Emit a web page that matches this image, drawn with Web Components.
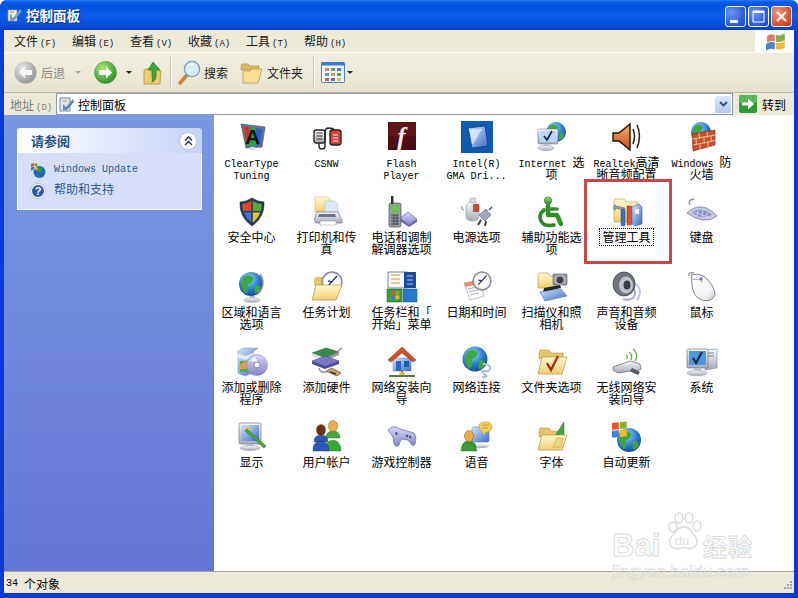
<!DOCTYPE html>
<html lang="zh">
<head>
<meta charset="utf-8">
<title>控制面板</title>
<style>
html, body { margin: 0; padding: 0; background: #fff; }
body { font: 12px "Noto Sans CJK SC", sans-serif; }
</style>
</head>
<body>
<xp-window>
  <xp-titlebar slot="top">控制面板</xp-titlebar>
  <xp-menubar slot="top"></xp-menubar>
  <xp-toolbar slot="top"></xp-toolbar>
  <xp-addressbar slot="top">控制面板</xp-addressbar>
  <xp-sidebar slot="side"></xp-sidebar>
  <cp-grid slot="main">
    <cp-icon icon="cleartype"><span>ClearType</span><br><span>Tuning</span></cp-icon>
    <cp-icon icon="csnw"><span>CSNW</span></cp-icon>
    <cp-icon icon="flash"><span>Flash</span><br><span>Player</span></cp-icon>
    <cp-icon icon="intel"><span>Intel(R)</span><br><span>GMA Dri...</span></cp-icon>
    <cp-icon icon="internet"><span>Internet </span>选<br>项</cp-icon>
    <cp-icon icon="realtek"><span>Realtek</span>高清<br>晰音频配置</cp-icon>
    <cp-icon icon="firewall"><span>Windows </span>防<br>火墙</cp-icon>

    <cp-icon icon="security">安全中心</cp-icon>
    <cp-icon icon="printers">打印机和传<br>真</cp-icon>
    <cp-icon icon="phone">电话和调制<br>解调器选项</cp-icon>
    <cp-icon icon="power">电源选项</cp-icon>
    <cp-icon icon="access">辅助功能选<br>项</cp-icon>
    <cp-icon icon="admin" focused>管理工具</cp-icon>
    <cp-icon icon="keyboard">键盘</cp-icon>

    <cp-icon icon="region">区域和语言<br>选项</cp-icon>
    <cp-icon icon="tasks">任务计划</cp-icon>
    <cp-icon icon="taskbar">任务栏和「<br>开始」菜单</cp-icon>
    <cp-icon icon="datetime">日期和时间</cp-icon>
    <cp-icon icon="scanner">扫描仪和照<br>相机</cp-icon>
    <cp-icon icon="sound">声音和音频<br>设备</cp-icon>
    <cp-icon icon="mouse">鼠标</cp-icon>

    <cp-icon icon="addremove">添加或删除<br>程序</cp-icon>
    <cp-icon icon="hardware">添加硬件</cp-icon>
    <cp-icon icon="netsetup">网络安装向<br>导</cp-icon>
    <cp-icon icon="netconn">网络连接</cp-icon>
    <cp-icon icon="folderopts">文件夹选项</cp-icon>
    <cp-icon icon="wireless">无线网络安<br>装向导</cp-icon>
    <cp-icon icon="system">系统</cp-icon>

    <cp-icon icon="display">显示</cp-icon>
    <cp-icon icon="users">用户帐户</cp-icon>
    <cp-icon icon="game">游戏控制器</cp-icon>
    <cp-icon icon="speech">语音</cp-icon>
    <cp-icon icon="fonts">字体</cp-icon>
    <cp-icon icon="autoupdate">自动更新</cp-icon>
  </cp-grid>
  <xp-highlight slot="main"></xp-highlight>
  <xp-statusbar slot="bottom"><span>34 </span>个对象</xp-statusbar>
  <baidu-mark slot="over"></baidu-mark>
</xp-window>

<script>
const CJK = '"Noto Sans CJK SC", sans-serif';
const MONO = '"Liberation Mono", monospace';

const DEFS = `<defs>
<linearGradient id="fo" x1="0" y1="0" x2="0" y2="1"><stop offset="0" stop-color="#fffad0"/><stop offset="1" stop-color="#f2cf70"/></linearGradient>
<radialGradient id="gl" cx=".4" cy=".3" r=".8"><stop offset="0" stop-color="#8fdcf5"/><stop offset=".55" stop-color="#2a78cc"/><stop offset="1" stop-color="#123a90"/></radialGradient>
<linearGradient id="gr" x1="0" y1="0" x2="0" y2="1"><stop offset="0" stop-color="#a8e070"/><stop offset="1" stop-color="#238a22"/></linearGradient>
<linearGradient id="bl" x1="0" y1="0" x2="1" y2="1"><stop offset="0" stop-color="#d4e6fc"/><stop offset="1" stop-color="#3a6cc8"/></linearGradient>
<linearGradient id="si" x1="0" y1="0" x2="0" y2="1"><stop offset="0" stop-color="#fafafa"/><stop offset="1" stop-color="#a4aab8"/></linearGradient>
<linearGradient id="wh" x1="0" y1="0" x2="1" y2="1"><stop offset="0" stop-color="#fff"/><stop offset=".7" stop-color="#f4f4f6"/><stop offset="1" stop-color="#c4c8d0"/></linearGradient>
<linearGradient id="pu" x1="0" y1="0" x2="0" y2="1"><stop offset="0" stop-color="#d8d8f8"/><stop offset="1" stop-color="#8484c8"/></linearGradient>
<linearGradient id="or" x1="0" y1="0" x2="0" y2="1"><stop offset="0" stop-color="#f8b060"/><stop offset="1" stop-color="#c84a20"/></linearGradient>
</defs>`;

// bits that several icons share
const globe = (cx, cy, r) => `<circle cx="${cx}" cy="${cy}" r="${r}" fill="url(#gl)"/><path d="M${cx - r * .6} ${cy - r * .6}q${r * .5} ${-r * .3} ${r * .8} ${r * .1}q${-r * .1} ${r * .5} ${-r * .5} ${r * .5}q${r * .2} ${r * .4} ${-r * .1} ${r * .8}q${-r * .6} ${-r * .5} ${-r * .2} ${-r * 1.4}zM${cx + r * .3} ${cy + r * .1}q${r * .5} ${-r * .1} ${r * .5} ${r * .3}q${-r * .1} ${r * .4} ${-r * .5} ${r * .4}z" fill="#3fa83a"/>`;
const monitor = (x, y, w, h) => `<rect x="${x}" y="${y}" width="${w}" height="${h}" rx="1.5" fill="url(#si)" stroke="#6a7890" stroke-width=".7"/><rect x="${x + 2}" y="${y + 2}" width="${w - 4}" height="${h - 5}" fill="url(#bl)"/><path d="M${x + w / 2 - 3} ${y + h}h6l1 3h-8z" fill="#b8c0d0"/><ellipse cx="${x + w / 2}" cy="${y + h + 4}" rx="${w / 2 - 1}" ry="2.4" fill="url(#si)" stroke="#8a94a8" stroke-width=".5"/>`;
const clock = (cx, cy, r) => `<circle cx="${cx}" cy="${cy}" r="${r}" fill="#e8e8f0" stroke="#8a8a98" stroke-width="1.4"/><circle cx="${cx}" cy="${cy}" r="${r - 2.2}" fill="#fff"/><path d="M${cx - r * .4} ${cy + r * .4}L${cx + r * .5} ${cy - r * .6}M${cx} ${cy}l${-r * .4} ${-r * .1}" stroke="#2a3a70" stroke-width="1.3" fill="none"/>`;
const person = (x, y, head, body) => `<path d="M${x - 7} ${y + 15}q0 -7 7 -7t7 7z" fill="${body}" stroke="#205020" stroke-width=".4"/><ellipse cx="${x}" cy="${y + 3}" rx="4.6" ry="5.6" fill="${head}" stroke="#7a4a18" stroke-width=".4"/>`;
const winflag = (x, y, s) => `<g transform="translate(${x} ${y}) scale(${s}) skewY(-6)"><path d="M0 1h6.5v6.5H0z" fill="#e4542c"/><path d="M7.5 1H14v6.5H7.5z" fill="#7fb22e"/><path d="M0 8.5h6.5V15H0z" fill="#3f7fd8"/><path d="M7.5 8.5H14V15H7.5z" fill="#f6b81e"/></g>`;

const ICONS = {
  cleartype: `<path d="M5 3l24 3-3 20-16 1z" fill="#68748c" stroke="#4a5268" stroke-width=".7"/><path d="M7.5 5.5L14 6.4 12 25h-1z" fill="#c8342e"/><path d="M14 6.4L20 7.2 20 25H12z" fill="#2aa040"/><path d="M20 7.2l6.5 .9L24 24.6 20 25z" fill="#2a60c8"/><text x="16.5" y="23" text-anchor="middle" font-family="Liberation Sans" font-weight="700" font-size="21" fill="#101010">A</text><rect x="14" y="26" width="5" height="3" fill="#d0d8e8"/>`,
  csnw: `<rect x="3" y="9" width="11" height="13" rx="2.5" fill="url(#si)" stroke="#222" stroke-width="1.3"/><path d="M5.5 12h6M5.5 15h6M5.5 18h6" stroke="#333"/><rect x="19" y="9" width="11" height="15" rx="2.5" fill="#d84038" stroke="#222" stroke-width="1.3"/><path d="M22 14h5M22 17h5M22 20h5" stroke="#fff"/><path d="M8 22v3q0 3 3 3t3-3V11q0-4 4-4t5 2" fill="none" stroke="#222" stroke-width="1.4"/>`,
  flash: `<rect x="2" y="1" width="28" height="28" fill="#4e0d12"/><rect x="2" y="1" width="28" height="14" fill="#5e1418"/><text x="15.5" y="24" text-anchor="middle" font-family="Liberation Serif" font-style="italic" font-weight="700" font-size="25" fill="#f4ecec">f</text>`,
  intel: `<rect x="0" y="0" width="32" height="32" fill="#0b5cb0"/><path d="M7 7l17-2 3 20-16 2z" fill="url(#bl)" stroke="#0a3a80" stroke-width=".8"/><path d="M9 9l12-1-8 14-2 2z" fill="#fff" opacity=".55"/>`,
  internet: `${globe(20, 11, 10)}<rect x="2" y="8" width="20" height="15" rx="1.5" fill="url(#si)" stroke="#6a7890" stroke-width=".6"/><rect x="4" y="10" width="16" height="11" fill="#b8d4f8"/><path d="M8 15l3 4 5-9" fill="none" stroke="#16204c" stroke-width="1.6"/><ellipse cx="10" cy="27" rx="8" ry="2.6" fill="url(#si)" stroke="#8a94a8" stroke-width=".5"/><path d="M8 23h5v2H8z" fill="#b8c0d0"/>`,
  realtek: `<path d="M2 12h6l11-9v26L8 20H2z" fill="url(#or)" stroke="#201008" stroke-width="1.4"/><path d="M22 8q3 7 0 15M26 4q5 11 0 23" fill="none" stroke="#2a1a10" stroke-width="1.5"/>`,
  firewall: `${globe(15, 11, 10)}<path d="M6 13l23-4v15L7 30z" fill="#c8502c" stroke="#6a2a14" stroke-width=".6"/><path d="M6.5 18l22.5-4M7 24l22-4.500M13 12l.5 6M21 10.500l.5 6M10 17.500l.3 6M18 16l.3 6.500M25 15l.3 6M14 23l.3 6M22 21l.3 7" stroke="#f0c098" stroke-width="1" fill="none"/>`,
  security: `<path d="M16 2q6 4 12 4 1 15-12 24Q3 21 4 6q6 0 12-4z" fill="#2a3a58" stroke="#1a2438" stroke-width=".6"/><path d="M15.300 5q-4 2.500-9 3 0 4 1 7h8z" fill="#d84a2c"/><path d="M16.800 5q4 2.500 9 3 0 4-1 7h-8z" fill="#5aaa3a"/><path d="M7.800 16.500h7.500v10Q10 22 7.800 16.500z" fill="#3a78d0"/><path d="M24.200 16.500h-7.400v10q5.500-4 7.400-10z" fill="#f2c62a"/>`,
  printers: `<path d="M4 1h13l4 4v11H4z" fill="url(#fo)" stroke="#c8a860" stroke-width=".5"/><path d="M14 5h10l3 3v10H14z" fill="#d8e8fa" stroke="#9ab0d0" stroke-width=".5"/><path d="M6 16h21l4 8v3H5l-2-3z" fill="url(#si)" stroke="#70788a" stroke-width=".7"/><path d="M9 25h16v4H9z" fill="#fff" stroke="#8a92a2" stroke-width=".5"/><path d="M8 18h16l1 3H7z" fill="#6a7284"/>`,
  phone: `<rect x="3" y="7" width="12" height="24" rx="2" fill="#9aa0a8" stroke="#48505a" stroke-width=".7"/><rect x="5" y="9" width="8" height="8" fill="#70c050"/><path d="M5 19h8M5 22h8M5 25h8M5 28h8M8 19v10M11 19v10" stroke="#3c4450"/><rect x="5" y="0" width="2.500" height="8" fill="#30343c"/><path d="M14 22l8-6 9 7-8 6z" fill="url(#pu)" stroke="#5a5a98" stroke-width=".6"/><path d="M14 22v3l9 6 8-5v-3l-8 6z" fill="#6a6aa8"/>`,
  power: `<rect x="5" y="6" width="13" height="19" rx="5" fill="url(#si)" stroke="#9098a8" stroke-width=".6"/><rect x="9" y="2" width="6" height="5" rx="1.500" fill="#d8d8e0" stroke="#9098a8" stroke-width=".5"/><rect x="12" y="8" width="6" height="8" fill="#d0483c"/><path d="M3 14q-3 0-2-4" stroke="#7a8090" fill="none"/><path d="M18 19l7-6 5 6-6 6z" fill="#a0a8bc" stroke="#5a6278" stroke-width=".6"/><path d="M20 24l-3 5M25 25l-1 5" stroke="#3c4252" stroke-width="2"/><path d="M28 14l3-3" stroke="#4a5268" stroke-width="1.500"/>`,
  access: `<circle cx="12" cy="4.500" r="3.800" fill="url(#gr)" stroke="#1c6a1c" stroke-width=".5"/><path d="M12 10v9h9l4 9" fill="none" stroke="#2f9226" stroke-width="4.500" stroke-linejoin="round" stroke-linecap="round"/><path d="M14 13h7" stroke="#2f9226" stroke-width="3.400" stroke-linecap="round"/><path d="M8 14q-6 5-3 11t13 4" fill="none" stroke="#2a8a24" stroke-width="3.600" stroke-linecap="round"/>`,
  admin: `<path d="M3 5l1-2h9l2 3h11v20H3z" fill="url(#fo)" stroke="#b8923c" stroke-width=".6"/><path d="M5 10l9 2-1 2-9-2zM5 9a2.500 2.500 0 1 0 0 5" fill="#9aa6b8" stroke="#5a6478" stroke-width=".6"/><rect x="10" y="13" width="4" height="17" rx="1.500" fill="#3a74c4" stroke="#1c3c78" stroke-width=".5"/><rect x="16" y="10" width="4.500" height="19" fill="#d4543a" stroke="#7a2c1c" stroke-width=".5"/><path d="M21 11l7-3 3 3v17l-7 2-3-2z" fill="url(#bl)" stroke="#4a5c90" stroke-width=".6"/><rect x="24" y="13" width="4" height="5" fill="#e8f0fc"/>`,
  keyboard: `<path d="M4 9q-3-5 4-6" fill="none" stroke="#8c8ca8" stroke-width="1.300"/><path d="M1 17q7-7 15-6t15 9q-6 5-14 4T1 17z" fill="#c8c8e0" stroke="#6c6c98" stroke-width=".7"/><path d="M6 16q6-3 11-2t9 5q-5 2-10 2T6 16z" fill="#8a90c8"/><path d="M8 16l14 5M12 14.500l-1 6M17 14l-1 7M22 16l-2 5" stroke="#e4e8f8" stroke-width=".7"/>`,
  region: `${globe(15, 13, 12)}<path d="M24 3q7 10-2 20" fill="none" stroke="#8a94a8" stroke-width="1.400"/><path d="M14 25h5v3h-5z" fill="#b8c0d0"/><ellipse cx="16" cy="29" rx="8" ry="2.300" fill="url(#si)" stroke="#8a94a8" stroke-width=".5"/>`,
  tasks: `<path d="M3 9l1-3h9l2 3h12v6H3z" fill="#e8c468"/>${clock(21, 11, 10)}<path d="M1 29L5 14h26l-6 15z" fill="url(#fo)" stroke="#b8923c" stroke-width=".7"/>`,
  taskbar: `<rect x="2" y="1" width="19" height="16" fill="#f4f6fa" stroke="#1c3c78" stroke-width=".6"/><rect x="18" y="1" width="12" height="16" fill="#1c4f9a"/><path d="M5 4h9M5 8h9M5 12h9" stroke="#d8a030" stroke-width="1.200"/><path d="M21 5h6M21 9h6M21 13h6" stroke="#a8c8f0" stroke-width="1.200"/><rect x="1" y="18" width="15" height="13" fill="#3c9a3c" stroke="#1c5c1c" stroke-width=".5"/>${winflag(5, 20, .6)}<rect x="17" y="18" width="14" height="13" fill="#2878cc" stroke="#1c4c90" stroke-width=".5"/>`,
  datetime: `<path d="M3 12l15-3 5 16-14 4z" fill="#fafafa" stroke="#9a9aa8" stroke-width=".6"/><path d="M3 12l15-3 1 4-15 3z" fill="#e89070"/><path d="M7 18l9-2M8 21l9-2M9 24l9-2" stroke="#b0b4c4"/>${clock(21, 10, 9)}`,
  scanner: `<path d="M2 4l1-2h9l2 3h6v12H2z" fill="url(#fo)" stroke="#b8923c" stroke-width=".6"/><rect x="17" y="3" width="14" height="11" rx="1" fill="#9aa0ac" stroke="#4c525e" stroke-width=".6"/><circle cx="24" cy="9" r="4.200" fill="#3c4250" stroke="#dcdce4"/><path d="M8 17L24 14l1 3L7 21z" fill="#20242c"/><path d="M4 21l21-3 6 7-22 5z" fill="url(#bl)" stroke="#5a6c98" stroke-width=".6"/>`,
  sound: `<path d="M20 15q7 5 2 12-5 3-10 1" fill="none" stroke="#a0a0e0" stroke-width="1.800"/><path d="M24 12q9 8 2 17" fill="none" stroke="#c0c0ee" stroke-width="1.800"/><ellipse cx="13" cy="13" rx="11" ry="12" fill="#70747c" stroke="#3c4048" stroke-width=".8"/><ellipse cx="15" cy="14" rx="7" ry="8.500" fill="#c0c4cc"/><ellipse cx="16" cy="14" rx="3.500" ry="4.500" fill="#383c44"/>`,
  mouse: `<path d="M8 2q-6-1-5 3" fill="none" stroke="#9a9aa8" stroke-width="1.400"/><path d="M6 4q9-3 16 5t7 15q-4 8-13 5T6 14 6 4z" fill="url(#wh)" stroke="#707684" stroke-width=".9"/><path d="M6 8q8 2 12-3M14 6.500l2 5" fill="none" stroke="#8a8a98" stroke-width=".7"/><circle cx="15" cy="8" r="1.500" fill="#6a6ab8"/>`,
  addremove: `<path d="M2 5l6-3h14l-5 4v21l-8 3-7-3z" fill="url(#bl)" stroke="#7a8cb0" stroke-width=".5"/><path d="M2 8l8 2 7-3v4l-7 3-8-2z" fill="#e4ecfa"/><rect x="4" y="15" width="9" height="11" fill="#55a84c"/><path d="M4 19l5-4 4 3v5H4z" fill="#e0a040"/><circle cx="21" cy="19" r="10.500" fill="url(#pu)" stroke="#7c7cb4" stroke-width=".5"/><circle cx="21" cy="19" r="3" fill="#fff" stroke="#8a8ab8"/><path d="M14 15a8 8 0 0 1 6-4l1 5z" fill="#f0f4ff"/>`,
  hardware: `<path d="M1 7l14-5 13 4-14 6z" fill="#3c8a48" stroke="#1e4c28" stroke-width=".5"/><path d="M1 7v3l13 5v-3z" fill="#dcdce4"/><path d="M14 12v3l14-6V6z" fill="#9a9aa8"/><path d="M1 15l13-5 14 5-14 5z" fill="#7a7ac8" stroke="#3c3c80" stroke-width=".5"/><path d="M1 15v3l13 5v-3zM14 20v3l14-5v-3z" fill="#4c4c98"/><path d="M27 5l4-3" stroke="#8a8a98" stroke-width="1.400"/><path d="M8 22q0 5 8 4" fill="none" stroke="#8a8a98" stroke-width="1.400"/><path d="M15 25l6-3 9 5-4 3z" fill="#c8a070" stroke="#4c3820" stroke-width=".6"/><path d="M19 26l6 2" stroke="#4c3820" stroke-width="1.500"/>`,
  netsetup: `<path d="M7 12h18v13H7z" fill="url(#bl)" stroke="#6a84b4" stroke-width=".5"/><path d="M2 14L16 1l14 13-3 2-11-9-11 9z" fill="#d0502c" stroke="#8a3018" stroke-width=".5"/><rect x="18" y="15" width="5" height="6" fill="#1e5cb0"/><rect x="10" y="15" width="5" height="10" fill="#2868bc"/><path d="M16 25v4M3 30h26" stroke="#5a7a3c" stroke-width="2"/><rect x="13.500" y="26" width="5" height="3" fill="#e0b040"/>`,
  netconn: `${globe(14, 13, 12.500)}<path d="M22 18q7 0 7 4t-5 3 0 4q4 2-3 2" fill="none" stroke="#a8c0dc" stroke-width="2.200"/>`,
  folderopts: `<path d="M3 7l1-3h9l2 3h12v6H3z" fill="#e8c468" stroke="#b08a38" stroke-width=".5"/><path d="M2 28L6 11h25l-5 17z" fill="url(#fo)" stroke="#b8923c" stroke-width=".7"/><path d="M11 17l4 7 7-14" fill="none" stroke="#b02418" stroke-width="2.300"/>`,
  wireless: `<path d="M2 21l17-6 10 3 1 5-7 4-3-2-13 2-5-3z" fill="url(#si)" stroke="#5a606c" stroke-width=".7"/><path d="M21 22l8 4-2 3-8-4z" fill="#505664"/><path d="M15 9q2 1 1 4M18 6q4 3 2 8M22 3q6 5 2 12" fill="none" stroke="#58b048" stroke-width="1.300"/>`,
  system: `<path d="M19 4l12-1v19l-12 2z" fill="url(#si)" stroke="#7a8296" stroke-width=".6"/><path d="M22 7h6M22 10h6" stroke="#7a8296"/><rect x="1" y="3" width="21" height="19" rx="1.500" fill="url(#si)" stroke="#687488" stroke-width=".7"/><rect x="3" y="5" width="17" height="14" fill="#4a98dc"/><path d="M7 12l3 5 6-11" fill="none" stroke="#16204c" stroke-width="2"/><path d="M8 22h7v3H8z" fill="#b8c0d0"/><ellipse cx="11" cy="27" rx="10" ry="2.800" fill="url(#si)" stroke="#8a94a8" stroke-width=".5"/>`,
  display: `${monitor(3, 2, 22, 21)}<path d="M8 8l4-2 3 3-3 3z" fill="#e8c050"/><path d="M11 8l19 17-2 2L9 10z" fill="#48a83c" stroke="#1e6a1c" stroke-width=".5"/>`,
  users: `${person(22, 2, "#f0a848", "#48a840")}<path d="M14 30q-1-10 8-11 8 1 8 11z" fill="#3ca838" stroke="#1c6a1c" stroke-width=".4"/>${person(10, 6, "#6a3010", "#2c58b4")}<path d="M2 30q-1-9 8-10 8 1 8 10z" fill="#2c58b4" stroke="#183070" stroke-width=".4"/>`,
  game: `<path d="M2 9l4-3q5-1 8 2l7 2 7 2q3 4 1 11-2 3-4 0l-3-4-7-1-2 6q-3 3-5-1l-1-7z" fill="url(#pu)" stroke="#6868a8" stroke-width=".7"/><path d="M9 12l3 1M10.500 11v3" stroke="#4c4c90" stroke-width="1.200"/><circle cx="21" cy="15" r="1.200" fill="#4c4c90"/><circle cx="24" cy="16" r="1.200" fill="#4c4c90"/>`,
  speech: `<rect x="11" y="6" width="17" height="15" rx="1.500" fill="url(#bl)" stroke="#6a7c9c" stroke-width=".6"/><ellipse cx="20" cy="25" rx="8" ry="2" fill="url(#si)"/><path d="M18 5q0-4 6-4h3q4 1 4 5t-4 5h-2l-3 4v-4q-4-1-4-6z" fill="#f6cc58" stroke="#b08a28" stroke-width=".5"/><path d="M21 4h7M21 7h6" stroke="#b08a28" stroke-width=".7"/>${person(8, 12, "#f0a848", "#48a840")}<path d="M0 30q0-8 8-9 7 1 8 9z" fill="#3c9a34" stroke="#1c5c1c" stroke-width=".4"/>`,
  fonts: `<path d="M3 10l1-3h9l2 3h10v6H3z" fill="#e8c468" stroke="#b08a38" stroke-width=".5"/><path d="M17 18L28 1v17z" fill="#3ca83c" stroke="#1c6a1c" stroke-width=".5"/><path d="M2 29L6 14h25l-5 15z" fill="url(#fo)" stroke="#b8923c" stroke-width=".7"/><path d="M17 26l4-9h6l-2 9z" fill="#f0d880" stroke="#c8a040" stroke-width=".6"/>`,
  autoupdate: `${globe(18, 19, 12)}${winflag(1, 1, 1.050)}`,
};

class XpWindow extends HTMLElement {
  _template = `
<style>
:host { display: flex; flex-direction: column; position: relative; width: 798px; height: 598px;
  box-sizing: border-box; background: #0a3ad4; border-radius: 7px 7px 0 0; overflow: hidden;
  padding: 0 4px 5px; color: #000; font: 12px ${CJK}; }
.top2 { display: flex; flex-direction: column; }
.body { flex: 1; display: flex; min-height: 0; background: #fff; }
.main { flex: 1; position: relative; background: #fff; }
.side { display: flex; }
</style>
<div class="top2"><slot name="top"></slot></div>
<div class="body">
  <div class="side"><slot name="side"></slot></div>
  <div class="main"><slot name="main"></slot></div>
</div>
<slot name="bottom"></slot>
<slot name="over"></slot>`;
  connectedCallback() {
    this.attachShadow({ mode: "open" }).innerHTML = this._template;
  }
}

class XpTitlebar extends HTMLElement {
  _template = `
<style>
:host { display: flex; align-items: center; height: 30px; margin: 0 -4px; box-sizing: border-box; padding: 0 6px 0 7px; gap: 3px;
  background: linear-gradient(#2a7cf0 0, #0a5cea 2px, #0052e0 6px, #0a5eec 15px, #0450dc 24px, #0240c8 30px); }
.name { flex: 1; color: #fff; font: 700 13.5px/26px ${CJK}; text-shadow: 1px 1px 1px #0a2a80; }
.btns { display: flex; gap: 2px; margin-top: 3px; }
.btn { width: 21px; height: 21px; box-sizing: border-box; border: 1px solid #fff; border-radius: 3px; position: relative;
  background: radial-gradient(circle at 30% 30%, #6c94f0, #2a58d8 70%, #2048c0); }
.close { background: radial-gradient(circle at 30% 30%, #ec9a80, #d84a28 70%, #b83818); }
svg { display: block; }
</style>
<svg width="16" height="16" viewBox="0 0 16 16">
  <rect x="1" y="3" width="9" height="11" fill="#e4ecf4" stroke="#8a98a8" stroke-width=".6"/><path d="M3 7l3 4 7-9 2 2-8 10H3z" fill="#7e9cbc"/><path d="M3 5h4M3 8h2" stroke="#c09040"/>
</svg>
<span class="name"><slot></slot></span>
<span class="btns">
<span class="btn"><svg width="19" height="19"><rect x="4" y="13" width="8" height="3" fill="#fff"/></svg></span>
<span class="btn"><svg width="19" height="19"><path d="M4 4h11v11H4z" fill="none" stroke="#fff"/><path d="M4 5h11" stroke="#fff" stroke-width="2"/></svg></span>
<span class="btn close"><svg width="19" height="19"><path d="M5 5l9 9M14 5l-9 9" stroke="#fff" stroke-width="2.200"/></svg></span>
</span>`;
  connectedCallback() {
    this.attachShadow({ mode: "open" }).innerHTML = this._template;
  }
}

class XpMenubar extends HTMLElement {
  _template = `
<style>
:host { display: flex; align-items: center; height: 23px; box-sizing: border-box; padding-left: 10px; margin: 0;
  background: #ece9d8; border-bottom: 1px solid #fbfaf4; font: 12px ${CJK}; color: #1a1a1a; }
.item { width: 58px; white-space: nowrap; margin-top: -2px; }
.k { font: 9px ${MONO}; margin-left: 2px; }
.flag { margin-left: auto; align-self: stretch; width: 39px; background: #fff; display: flex; align-items: center; justify-content: center; }
</style>
<span class="item">文件<span class="k">(F)</span></span>
<span class="item">编辑<span class="k">(E)</span></span>
<span class="item">查看<span class="k">(V)</span></span>
<span class="item">收藏<span class="k">(A)</span></span>
<span class="item">工具<span class="k">(T)</span></span>
<span class="item">帮助<span class="k">(H)</span></span>
<span class="flag"><svg width="22" height="20" viewBox="0 0 22 20"><g transform="translate(2 3) skewY(-8) scale(1.100)"><path d="M1 2q3-2 7 0v6q-4-2-7 0z" fill="#d8604a" opacity=".85"/><path d="M9 2q4 2 8 0v6q-4 2-8 0z" fill="#84ae46"/><path d="M0 9q4-2 8 0v6q-4-2-8 0z" fill="#4a84cc"/><path d="M9 9q4 2 8 0v6q-4 2-8 0z" fill="#f0b83c"/></g></svg></span>`;
  connectedCallback() {
    this.attachShadow({ mode: "open" }).innerHTML = this._template;
  }
}

class XpToolbar extends HTMLElement {
  _template = `
<style>
:host { display: flex; align-items: center; height: 40px; box-sizing: border-box; padding-left: 10px;
  background: linear-gradient(#f0eee0, #ece9d8 60%, #e6e2ce); border-bottom: 1px solid #b8b6a4; font: 12px ${CJK}; color: #222; }
svg { display: block; flex: none; }
.sep { width: 1px; height: 33px; background: #c8c5b2; border-right: 1px solid #fbfaf4; flex: none; }
.gray { color: #8a8a84; }
.drop { width: 0; height: 0; border: 3px solid transparent; border-top: 3px solid #222; border-bottom: 0; flex: none; }
</style>
<svg width="23" height="23" viewBox="0 0 23 23"><defs><radialGradient id="g1" cx=".35" cy=".3" r=".8"><stop offset="0" stop-color="#e8e8e8"/><stop offset="1" stop-color="#8e8e8e"/></radialGradient></defs><circle cx="11.500" cy="11.500" r="11" fill="url(#g1)"/><path d="M5 11.500l6-6v3.500h7v5h-7v3.500z" fill="#f8f8f8"/></svg>
<span class="gray" style="margin-left:4px">后退</span>
<span class="drop" style="border-top-color:#a8a8a0;margin:0 13px 0 10px"></span>
<svg width="23" height="23" viewBox="0 0 23 23"><defs><radialGradient id="g2" cx=".35" cy=".3" r=".8"><stop offset="0" stop-color="#a8e878"/><stop offset="1" stop-color="#208a20"/></radialGradient></defs><circle cx="11.500" cy="11.500" r="11" fill="url(#g2)" stroke="#4a9a3c" stroke-width=".6"/><path d="M18 11.500l-6-6v3.500H5v5h7v3.500z" fill="#fff"/></svg>
<span class="drop" style="margin:0 11px 0 9px"></span>
<svg width="20" height="24" viewBox="0 0 20 24"><path d="M1 10l1-2h5l1 2h10l-1 13H1z" fill="#f0cc68" stroke="#a88a38" stroke-width=".7"/><path d="M10 1l7 8h-4v7q0 3-4 5 1-3 0-5V9H5z" fill="#3caa38" stroke="#1c6a1c" stroke-width=".6"/></svg>
<span class="sep" style="margin:0 5px 0 7px"></span>
<svg width="24" height="26" viewBox="0 0 24 26"><path d="M10 15l-7 8" stroke="#c8884c" stroke-width="3.600" stroke-linecap="round"/><circle cx="15" cy="9" r="7.600" fill="#d8ecfa" stroke="#7a9cb8" stroke-width="1.400"/><path d="M11 6q3-3 6-1" fill="none" stroke="#fff" stroke-width="1.500"/></svg>
<span style="margin-left:3px">搜索</span>
<svg style="margin-left:12px" width="24" height="24" viewBox="0 0 24 24"><path d="M1 5l1-2h6l2 2h9v4H1z" fill="#d8b860" stroke="#a88a38" stroke-width=".6"/><path d="M3 22V10h7l1-2h11l-4 14z" fill="#f6e098" stroke="#b0923c" stroke-width=".7"/></svg>
<span style="margin-left:3px">文件夹</span>
<span class="sep" style="margin:0 6px 0 10px"></span>
<svg width="24" height="21" viewBox="0 0 24 21"><rect x=".5" y=".5" width="23" height="20" rx="1" fill="#f4f8fe" stroke="#4a80bc"/><rect x=".5" y=".5" width="23" height="3" fill="#3a78c4"/><g fill="#d08a50"><rect x="4" y="6" width="4" height="3"/><rect x="10" y="6" width="4" height="3" fill="#5aaa50"/><rect x="16" y="6" width="4" height="3" fill="#4a80c8"/></g><g fill="#5a9ac8"><rect x="4" y="11" width="4" height="3"/><rect x="10" y="11" width="4" height="3" fill="#c8a050"/><rect x="16" y="11" width="4" height="3" fill="#5aaa50"/></g><g fill="#c86a50"><rect x="4" y="16" width="4" height="3"/><rect x="10" y="16" width="4" height="3" fill="#5a70a8"/><rect x="16" y="16" width="4" height="3" fill="#e0c050"/></g></svg>
<span class="drop" style="margin-left:2px"></span>`;
  connectedCallback() {
    this.attachShadow({ mode: "open" }).innerHTML = this._template;
  }
}

class XpAddressbar extends HTMLElement {
  _template = `
<style>
:host { display: flex; align-items: center; height: 22px; box-sizing: border-box; padding: 0 8px 0 6px; background: #ece9d8; font: 12px ${CJK}; }
.lab { color: #80807a; width: 46px; white-space: nowrap; }
.k { font: 9px ${MONO}; margin-left: 2px; }
.box { flex: 1; height: 22px; box-sizing: border-box; border: 1px solid #8e9ca8; background: #fff; display: flex; align-items: center; padding: 0 1px 0 2px; gap: 3px; }
.text { flex: 1; }
.arrow { width: 16px; height: 17px; box-sizing: border-box; border-radius: 2px; background: linear-gradient(#dce6fa, #b4c8f2); display: flex; align-items: center; justify-content: center; }
.go { margin-left: 6px; display: flex; align-items: center; gap: 5px; width: 47px; }
svg { display: block; flex: none; }
</style>
<span class="lab">地址<span class="k">(D)</span></span>
<div class="box">
  <svg width="16" height="16" viewBox="0 0 16 16"><rect x="1" y="2" width="10" height="13" fill="#dfe8f4" stroke="#4a6c98" stroke-width=".8"/><path d="M4 8l3 3 7-8 1 3-7 8H4z" fill="#5a86b4"/><path d="M3 5h5" stroke="#c09040"/></svg>
  <span class="text"><slot></slot></span>
  <span class="arrow"><svg width="9" height="7"><path d="M1 1l3.500 3.500L8 1" fill="none" stroke="#3c5484" stroke-width="2"/></svg></span>
</div>
<span class="go">
  <svg width="18" height="18" viewBox="0 0 18 18"><rect width="18" height="18" rx="2" fill="#2f9a34"/><rect width="18" height="8" rx="2" fill="#58b858"/><path d="M3 7.500h6V3.500l6 5.500-6 5.500v-4H3z" fill="#fff"/></svg>
  <span>转到</span>
</span>`;
  connectedCallback() {
    this.attachShadow({ mode: "open" }).innerHTML = this._template;
  }
}

class XpSidebar extends HTMLElement {
  _template = `
<style>
:host { display: block; width: 210px; box-sizing: border-box; padding: 13px 12px 0 13px; background: linear-gradient(#7a98e0, #6375d6); font: 12px ${CJK}; }
.head { height: 25px; box-sizing: border-box; border-radius: 3px 3px 0 0; padding: 0 6px 0 14px; display: flex; align-items: center; justify-content: space-between;
  background: linear-gradient(90deg, #fff, #c6d3f7); color: #215080; font-weight: 700; font-size: 13px; }
.chev { width: 16px; height: 16px; border-radius: 50%; background: #fff; box-shadow: 0 0 0 1px #b4c0e8; display: flex; align-items: center; justify-content: center; }
.list { height: 57px; box-sizing: border-box; padding: 7px 0 0 12px; background: #d6dff7; border: 1px solid #fff; border-top: 0; display: flex; flex-direction: column; color: #2a5a98; }
.row { display: flex; align-items: center; gap: 8px; height: 19px; white-space: nowrap; }
.en { font: 10px ${MONO}; }
svg { display: block; flex: none; }
.help { margin-top: 5px; }
</style>
<div class="head"><span>请参阅</span>
  <span class="chev"><svg width="9" height="10"><path d="M1 4.500l3.500-3.500L8 4.500M1 9l3.500-3.500L8 9" fill="none" stroke="#223a70" stroke-width="1.500"/></svg></span>
</div>
<div class="list">
  <div class="row"><svg width="16" height="16" viewBox="0 0 16 16"><circle cx="9.500" cy="10" r="6" fill="#1e6ab4"/><path d="M7 7q3-3 5 0-1 4-4 3z" fill="#3c9a3c"/><path d="M1 2l3-1v3l-3 1z" fill="#d8583c"/><path d="M4.500 1l3 1v3l-3-1z" fill="#6ca83c"/><path d="M1 5.500l3-1v3l-3 1z" fill="#3c78c8"/><path d="M4.500 4.500l3 1v3l-3-1z" fill="#f0b830"/></svg><span class="en">Windows Update</span></div>
  <div class="row"><svg class="help" width="16" height="16" viewBox="0 0 16 16"><circle cx="8" cy="8" r="7.500" fill="#fff" stroke="#8a98c0" stroke-width=".5"/><circle cx="8" cy="8" r="6" fill="#2a58b0"/><text x="8" y="12" text-anchor="middle" font-family="Liberation Sans" font-weight="700" font-size="11" fill="#fff">?</text></svg><span>帮助和支持</span></div>
</div>`;
  connectedCallback() {
    this.attachShadow({ mode: "open" }).innerHTML = this._template;
  }
}

class CpGrid extends HTMLElement {
  _template = `
<style>
:host { display: grid; grid-template-columns: repeat(7, 75px); grid-auto-rows: 75px; padding-top: 6px; }
</style>
<slot></slot>`;
  connectedCallback() {
    this.attachShadow({ mode: "open" }).innerHTML = this._template;
  }
}

class CpIcon extends HTMLElement {
  _template = `
<style>
:host { display: flex; flex-direction: column; align-items: center; width: 75px; font: 12px/12px ${CJK}; color: #000; }
svg { display: block; width: 32px; height: 32px; margin-bottom: 4px; overflow: visible; }
.label { text-align: center; white-space: nowrap; margin-top: -1px; }
:host([focused]) .label { outline: 1px dotted #000; padding: 2px; margin-top: -3px; }
::slotted(span) { font: 10px/0 ${MONO}; white-space: pre; }
</style>
<svg viewBox="0 0 32 32">${DEFS}<g class="art"></g></svg>
<div class="label"><slot></slot></div>`;
  connectedCallback() {
    this._shadowRoot = this.attachShadow({ mode: "open" });
    this._shadowRoot.innerHTML = this._template;
    this._shadowRoot.querySelector(".art").innerHTML = ICONS[this.getAttribute("icon")] || "";
  }
}

// red box the screenshot's author drew round one icon
class XpHighlight extends HTMLElement {
  _template = `
<style>
:host { position: absolute; left: 370px; top: 64px; width: 88px; height: 85px; box-sizing: border-box; border: 3px solid #c4484c; pointer-events: none; }
</style>`;
  connectedCallback() {
    this.attachShadow({ mode: "open" }).innerHTML = this._template;
  }
}

class XpStatusbar extends HTMLElement {
  _template = `
<style>
:host { display: flex; align-items: center; height: 22px; box-sizing: border-box; padding: 1px 0 0 2px; background: #ece9d8; border-top: 1px solid #a8a594; font: 12px ${CJK}; position: relative; }
::slotted(span) { font: 10px ${MONO}; white-space: pre; }
svg { position: absolute; right: 1px; bottom: 1px; }
</style>
<slot></slot>
<svg width="12" height="12"><g fill="#a8a594"><rect x="9" y="1" width="2" height="2"/><rect x="6" y="4" width="2" height="2"/><rect x="9" y="4" width="2" height="2"/><rect x="3" y="7" width="2" height="2"/><rect x="6" y="7" width="2" height="2"/><rect x="9" y="7" width="2" height="2"/></g></svg>`;
  connectedCallback() {
    this.attachShadow({ mode: "open" }).innerHTML = this._template;
  }
}

// faint watermark in the lower right corner
class BaiduMark extends HTMLElement {
  _template = `
<style>
:host { position: absolute; left: 610px; top: 512px; width: 146px; height: 70px; color: rgba(255,255,255,.55); pointer-events: none; }
.big { position: absolute; left: 2px; top: 18px; font: 700 31px/32px "Liberation Sans", sans-serif; -webkit-text-stroke: 1px rgba(210,210,210,.8); }
.cn { position: absolute; left: 93px; top: 21px; font: 700 24px/26px ${CJK}; -webkit-text-stroke: 1px rgba(210,210,210,.8); letter-spacing: 1px; white-space: nowrap; }
.url { position: absolute; left: 2px; top: 52px; font: 17px/16px "Liberation Sans", sans-serif; -webkit-text-stroke: .6px rgba(205,205,205,.8); white-space: nowrap; }
svg { position: absolute; left: 52px; top: 0; }
</style>
<span class="big">Bai</span>
<svg width="42" height="40" viewBox="0 0 42 40" fill="none" stroke="rgba(210,210,210,.85)" stroke-width="1.400">
  <ellipse cx="11" cy="15" rx="4" ry="5"/><ellipse cx="17" cy="6" rx="4" ry="5"/><ellipse cx="27" cy="6" rx="4" ry="5"/><ellipse cx="35" cy="14" rx="4" ry="5"/>
  <path d="M22 15q6 0 9 7 6 5 3 11-3 5-9 3-3-1-6 0-7 2-11-3-2-6 4-11 3-7 10-7z"/>
  <text x="20" y="33" text-anchor="middle" font-family="Liberation Sans" font-size="13" fill="rgba(205,205,205,.6)" stroke="none">du</text>
</svg>
<span class="cn">经验</span>
<span class="url">jingyan.baidu.com</span>`;
  connectedCallback() {
    this.attachShadow({ mode: "open" }).innerHTML = this._template;
  }
}

customElements.define("xp-window", XpWindow);
customElements.define("xp-titlebar", XpTitlebar);
customElements.define("xp-menubar", XpMenubar);
customElements.define("xp-toolbar", XpToolbar);
customElements.define("xp-addressbar", XpAddressbar);
customElements.define("xp-sidebar", XpSidebar);
customElements.define("cp-grid", CpGrid);
customElements.define("cp-icon", CpIcon);
customElements.define("xp-highlight", XpHighlight);
customElements.define("xp-statusbar", XpStatusbar);
customElements.define("baidu-mark", BaiduMark);
</script>
</body>
</html>
